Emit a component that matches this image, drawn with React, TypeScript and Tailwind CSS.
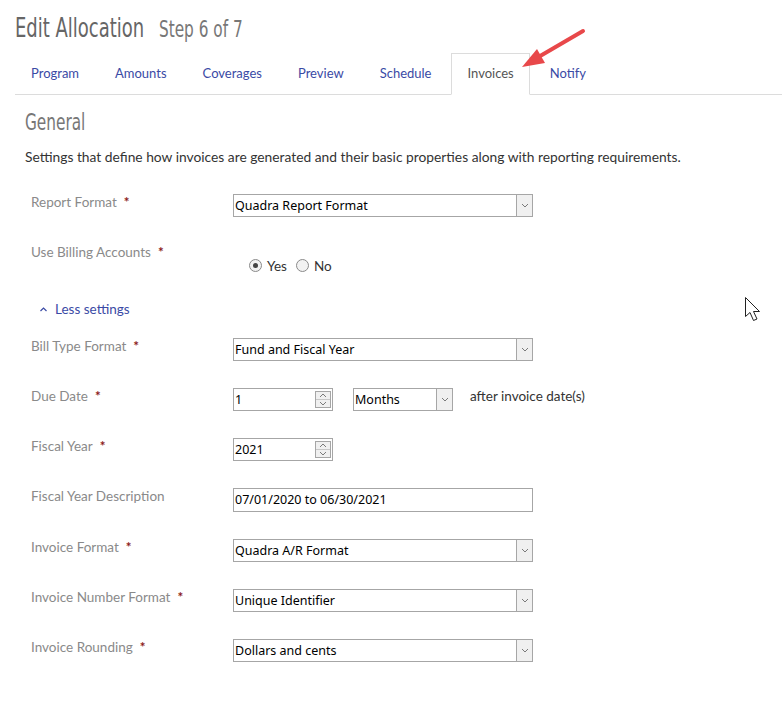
import React from 'react';

const narrow = { fontFamily: '"Liberation Sans Narrow", "DejaVu Sans Condensed", sans-serif' };

const tabs = ['Program', 'Amounts', 'Coverages', 'Preview', 'Schedule', 'Invoices', 'Notify'];

const Chevron = () => (
  <svg width="8" height="5" viewBox="0 0 8 5" fill="none">
    <path d="M1 1 L4 4 L7 1" stroke="#7a7a7a" strokeWidth="1" />
  </svg>
);

const Select: React.FC<{ value: string; width: string }> = ({ value, width }) => (
  <div className={`flex h-[23px] border border-[#a6a6a6] bg-white ${width}`}>
    <div className="flex-1 pl-[1px] text-[12.5px] leading-[21px] text-black font-['Noto_Sans',sans-serif]">{value}</div>
    <div className="flex w-[16px] items-center justify-center border-l border-[#a6a6a6] bg-[#f0f0f0]">
      <Chevron />
    </div>
  </div>
);

const Spinner: React.FC<{ value: string }> = ({ value }) => (
  <div className="flex h-[23px] w-[100px] items-center border border-[#a6a6a6] bg-white">
    <div className="flex-1 pl-[1px] text-[12.5px] leading-[21px] text-black font-['Noto_Sans',sans-serif]">{value}</div>
    <div className="mr-[1px] flex h-[17px] w-[16px] flex-col border border-[#a6a6a6] bg-[#f0f0f0]">
      <div className="flex flex-1 items-center justify-center border-b border-[#c8c8c8]">
        <svg width="8" height="5" viewBox="0 0 8 5" fill="none">
          <path d="M1 4 L4 1 L7 4" stroke="#7a7a7a" strokeWidth="1" />
        </svg>
      </div>
      <div className="flex flex-1 items-center justify-center">
        <Chevron />
      </div>
    </div>
  </div>
);

const Label: React.FC<{ text: string; required?: boolean }> = ({ text, required }) => (
  <div className="w-[202px] shrink-0 text-[13.5px] leading-[16px] text-[#8a8a8a]">
    {text}
    {required && <span className="ml-[7px] font-bold text-[#8b1a1a]">*</span>}
  </div>
);

const Row: React.FC<{ children: React.ReactNode }> = ({ children }) => (
  <div className="flex h-[50px] items-start pt-[1px]">{children}</div>
);

const Radio: React.FC<{ checked?: boolean; label: string }> = ({ checked, label }) => (
  <label className="flex items-center gap-[5px] text-[13.5px] text-[#333]">
    <span className="flex h-[13px] w-[13px] items-center justify-center rounded-full border border-[#8a8a8a] bg-[#f2f2f2]">
      {checked && <span className="h-[5px] w-[5px] rounded-full bg-[#444]" />}
    </span>
    {label}
  </label>
);

export default function App() {
  return (
    <div className="relative h-[716px] w-[782px] overflow-hidden bg-white font-['Lato',sans-serif]">
      {/* header */}
      <div className="pl-[15px] pt-[11px]">
        <div className="flex origin-left scale-x-[0.74] items-baseline" style={narrow}>
          <h1 className="text-[27px] leading-[34px] text-[#666]">Edit Allocation</h1>
          <span className="ml-[20px] text-[23px] text-[#777]">Step 6 of 7</span>
        </div>
      </div>

      {/* tabs */}
      <div className="ml-[15px] mt-[7px] flex h-[41px] items-end gap-[4px] border-b border-[#dcdcdc]">
        {tabs.map((t) => (
          <div
            key={t}
            className={
              t === 'Invoices'
                ? 'mb-[-1px] flex h-[42px] items-center border border-b-white border-[#dcdcdc] bg-white px-[15px] pt-[1px] text-[13px] text-[#555]'
                : 'flex h-[41px] items-center px-[16px] pt-[1px] text-[13px] text-[#3a4aa5]'
            }
          >
            {t}
          </div>
        ))}
      </div>

      {/* body */}
      <div className="pl-[25px]">
        <div className="mt-[14px] h-[26px]">
          <h2 className="origin-left scale-x-[0.74] text-[23px] leading-[26px] text-[#777]" style={narrow}>General</h2>
        </div>
        <p className="mt-[13px] text-[13.8px] leading-[18px] text-[#333]">
          Settings that define how invoices are generated and their basic properties along with reporting requirements.
        </p>

        <div className="mt-[27px] pl-[6px]">
          <Row>
            <Label text="Report Format" required />
            <Select value="Quadra Report Format" width="w-[300px]" />
          </Row>
          <Row>
            <Label text="Use Billing Accounts" required />
            <div className="flex gap-[9px] pl-[16px] pt-[12px]">
              <Radio checked label="Yes" />
              <Radio label="No" />
            </div>
          </Row>
          <div className="flex h-[44px] items-start gap-[7px] pl-[8px] pt-[8px] text-[13.5px] leading-[16px] text-[#3a4aa5]">
            <svg width="9" height="16" viewBox="0 0 9 16" fill="none">
              <path d="M1.5 10 L4.5 7 L7.5 10" stroke="#3a4aa5" strokeWidth="1.2" />
            </svg>
            Less settings
          </div>
          <Row>
            <Label text="Bill Type Format" required />
            <Select value="Fund and Fiscal Year" width="w-[300px]" />
          </Row>
          <Row>
            <Label text="Due Date" required />
            <Spinner value="1" />
            <div className="ml-[20px]">
              <Select value="Months" width="w-[100px]" />
            </div>
            <span className="ml-[17px] text-[13.5px] leading-[16px] text-[#333]">after invoice date(s)</span>
          </Row>
          <Row>
            <Label text="Fiscal Year" required />
            <Spinner value="2021" />
          </Row>
          <Row>
            <Label text="Fiscal Year Description" />
            <div className="h-[24px] w-[300px] border border-[#a6a6a6] pl-[1px] text-[12.5px] leading-[22px] text-black font-['Noto_Sans',sans-serif]">
              07/01/2020 to 06/30/2021
            </div>
          </Row>
          <div className="h-[1px]" />
          <Row>
            <Label text="Invoice Format" required />
            <Select value="Quadra A/R Format" width="w-[300px]" />
          </Row>
          <Row>
            <Label text="Invoice Number Format" required />
            <Select value="Unique Identifier" width="w-[300px]" />
          </Row>
          <Row>
            <Label text="Invoice Rounding" required />
            <Select value="Dollars and cents" width="w-[300px]" />
          </Row>
        </div>
      </div>

      {/* annotation arrow */}
      <svg className="pointer-events-none absolute left-0 top-0" width="782" height="120">
        <line x1="583" y1="31" x2="535" y2="59" stroke="#e8484a" strokeWidth="4" strokeLinecap="round" />
        <polygon points="522,67 537,49 545,63" fill="#e8484a" />
      </svg>

      {/* mouse cursor */}
      <svg className="pointer-events-none absolute left-[745px] top-[297px]" width="20" height="27" viewBox="0 0 20 27">
        <path d="M0.5 0.5 L0.5 19.5 L5 15.5 L8.5 23.5 L12 22 L8.5 14.5 L14.5 14.5 Z" fill="white" stroke="#222" strokeWidth="1" strokeLinejoin="round" />
      </svg>
    </div>
  );
}
